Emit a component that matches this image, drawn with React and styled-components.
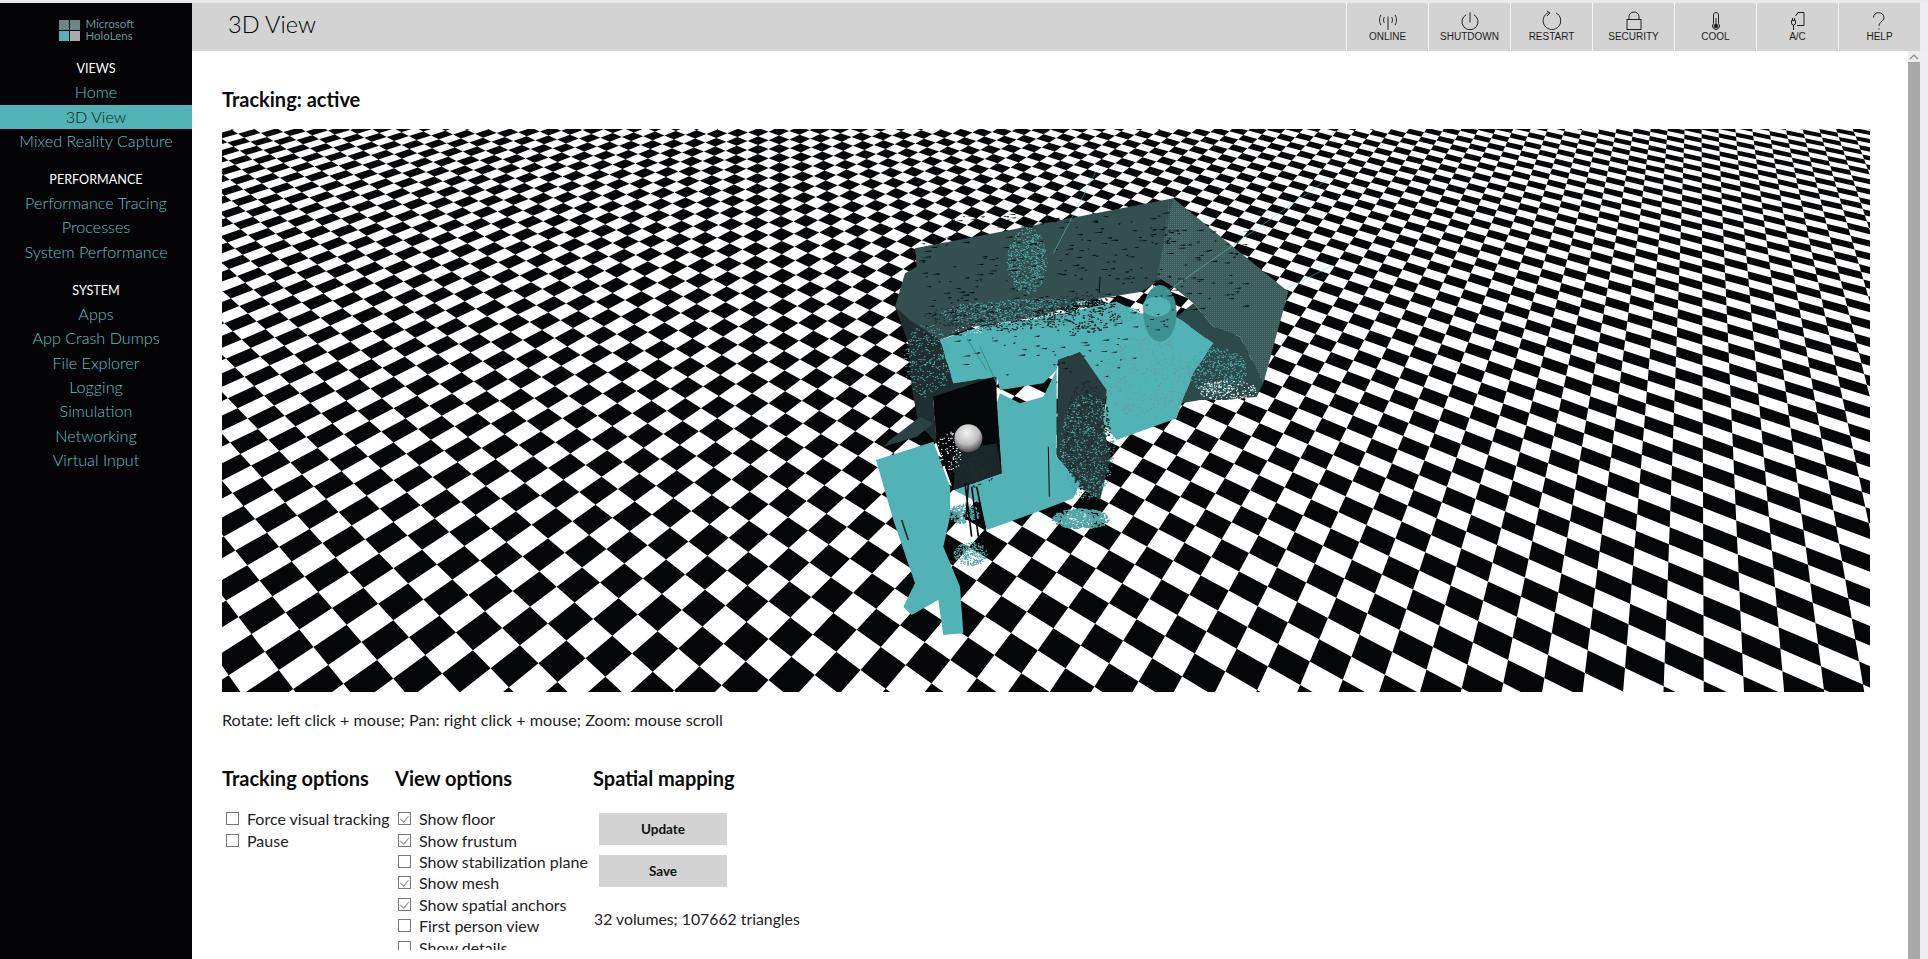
import React, { useMemo } from "react";
import styled, { createGlobalStyle } from "styled-components";

const UI = `"Lato", "Open Sans", sans-serif`;
const TEAL = "#52b3b6";

const Global = createGlobalStyle`
  html, body { margin: 0; padding: 0; height: 100%; overflow: hidden; background: #fff; }
  #root { height: 959px; }
  * { box-sizing: border-box; }
`;

const Page = styled.div`
  width: 1928px; height: 959px; overflow: hidden; background: #fff;
  display: flex; flex-direction: column; font-family: ${UI}; color: #111;
`;
const TopStrip = styled.div`height: 3px; flex: none; background: #e9e9eb;`;
const Body = styled.div`flex: 1; min-height: 0; display: flex;`;

const Sidebar = styled.nav`
  width: 192px; flex: none; background: #040407; display: flex; flex-direction: column;
`;
const LogoBlock = styled.div`
  height: 53px; flex: none; display: flex; align-items: center; justify-content: center;
  gap: 6px; padding: 1px 0 0 0;
`;
const LogoText = styled.div`
  font-size: 11.5px; line-height: 12px; color: #6f9293; width: 48px;
`;
const NavSection = styled.div`
  display: flex; flex-direction: column; margin-bottom: 13.4px;
`;
const NavHeading = styled.div`
  height: 24.35px; line-height: 26px; text-align: center; font-size: 12.6px; color: #fff;
`;
const NavItem = styled.a`
  height: 24.35px; line-height: 24px; text-align: center; font-size: 16.2px; font-weight: 300;
  background: ${(p) => (p.$active ? TEAL : "transparent")};
  color: ${(p) => (p.$active ? "#0b1a1b" : "#62c0c3")};
`;

const Right = styled.div`flex: 1; min-width: 0; display: flex; flex-direction: column;`;
const Header = styled.header`
  height: 48px; flex: none; display: flex; align-items: stretch;
  background: linear-gradient(to right, #d3d3d3 1728px, #ededef 1728px);
`;
const PageTitle = styled.h1`
  margin: 0; padding: 0 0 0 36px; flex: 1; font-weight: 300; font-size: 23.5px; line-height: 43px; color: #000;
`;
const ToolButton = styled.div`
  width: 82px; flex: none; display: flex; flex-direction: column; align-items: center;
  border-left: 1px solid #f4f4f4; background: #d3d3d3; padding-top: 8px;
`;
const ToolLabel = styled.span`
  font-family: "Liberation Sans", Arial, sans-serif; font-size: 10px; line-height: 12px; color: #1c1c1c;
`;
const EndCap = styled.div`width: 8px; flex: none; background: #ededef;`;

const Lower = styled.div`flex: 1; min-height: 0; display: flex;`;
const MainClip = styled.div`flex: 1; min-width: 0; height: 898.5px; overflow: hidden;`;
const Main = styled.main`padding: 36px 0 0 30px;`;
const Status = styled.h2`margin: 0 0 18px; font-size: 20px; line-height: 24px; font-weight: 700; color: #0a0a0a;`;
const Floor = styled.svg`display: block; width: 1648px; height: 563px;`;
const Hint = styled.p`margin: 18px 0 0; font-size: 16.2px; line-height: 20px; font-weight: 400; color: #222;`;
const Options = styled.div`display: flex; margin-top: 36px;`;
const Column = styled.section`width: ${(p) => p.$w}px; flex: none;`;
const OptionHeading = styled.h3`margin: 0; font-size: 20px; line-height: 24px; font-weight: 700; color: #0a0a0a;`;
const OptionList = styled.div`
  margin-top: 18px; padding-left: ${(p) => p.$inset}px; display: flex; flex-direction: column;
`;
const OptionRow = styled.label`
  height: 21.4px; display: flex; align-items: center; gap: 8px; font-size: 16px; color: #222; white-space: nowrap;
`;
const Check = styled.input.attrs({ type: "checkbox", readOnly: true })`
  appearance: none; margin: 0; width: 13px; height: 13px; flex: none; position: relative;
  border: 1px solid #777; background: #fff;
  &:checked::after {
    content: ""; position: absolute; left: 3px; top: 1px; width: 4px; height: 7px;
    border: solid #8a8a8a; border-width: 0 1px 1px 0; transform: rotate(40deg);
  }
`;
const ActionStack = styled.div`margin: 23px 0 0 6px; display: flex; flex-direction: column; gap: 10px;`;
const ActionButton = styled.button`
  width: 128px; height: 32px; border: 0; padding: 0; background: #d3d3d3; font-family: ${UI};
  font-size: 13.5px; font-weight: 700; color: #111;
`;
const Stats = styled.p`margin: 22px 0 0 1px; font-size: 15.8px; line-height: 20px; color: #222; white-space: nowrap;`;

const Scrollbar = styled.div`
  width: 20px; flex: none; display: flex; background: linear-gradient(to right, #fff 12px, #eeedf0 12px);
`;
const ScrollLane = styled.div`width: 12px; display: flex; flex-direction: column;`;
const ScrollArrow = styled.div`height: 11px; flex: none; background: #ecebee; display: flex; align-items: center; justify-content: center;`;
const ScrollThumb = styled.div`flex: 1; background: #a9a9a9;`;

const Ico = styled.svg`
  width: 26px; height: 19.5px; flex: none; overflow: visible; fill: none; stroke: #222; stroke-width: 1;
`;

const icons = {
  online: (
    <>
      <path d="M13 5.5V19" />
      <path d="M6 4C4 7 4 11 6 14" />
      <path d="M9.3 6C8.3 8 8.3 10 9.3 12" />
      <path d="M20 4C22 7 22 11 20 14" />
      <path d="M16.7 6C17.7 8 17.7 10 16.7 12" />
    </>
  ),
  power: (
    <>
      <path d="M13 1.5V11.5" />
      <path d="M9.2 3.7A8 8 0 1 0 16.8 3.7" />
    </>
  ),
  restart: (
    <>
      <path d="M17 1.9A8.8 8.8 0 1 1 9.5 1.6" />
      <path d="M8 0L11 2L8 5" />
    </>
  ),
  lock: (
    <>
      <rect x="6" y="8.5" width="14" height="10" />
      <path d="M8 8.5V5.5a5 4.5 0 0 1 10 0V8.5" />
    </>
  ),
  thermo: (
    <>
      <path d="M10.5 12.5V4a2.5 2.5 0 0 1 5 0V12.5a3.5 3.5 0 1 1-5 0z" />
      <path d="M13 7V14" />
      <circle cx="13" cy="15.1" r="1.9" fill="#222" />
    </>
  ),
  ac: (
    <>
      <path d="M10.5 5L13 1.5H19V14.5H12" />
      <path d="M6.5 9.5h4v2.5a2 2 0 0 1-4 0z" />
      <path d="M7.5 9.5V7M9.5 9.5V7M8.5 14v5" />
    </>
  ),
  help: (
    <>
      <path d="M6.5 6.5C6.5 3.5 9 1.7 11.7 1.7c3 0 5.3 2 5.3 4.6c0 2.5-1.7 3.5-3.2 5C12.5 12.5 12 13.5 12 15" />
      <path d="M12 17.3v1.2" />
    </>
  ),
};

const tools = [
  ["ONLINE", "online"], ["SHUTDOWN", "power"], ["RESTART", "restart"], ["SECURITY", "lock"],
  ["COOL", "thermo"], ["A/C", "ac"], ["HELP", "help"],
];

const navGroups = [
  ["VIEWS", ["Home", "3D View", "Mixed Reality Capture"]],
  ["PERFORMANCE", ["Performance Tracing", "Processes", "System Performance"]],
  ["SYSTEM", ["Apps", "App Crash Dumps", "File Explorer", "Logging", "Simulation", "Networking", "Virtual Input"]],
];

/* perspective floor: homography from two vanishing points */
function buildFloor() {
  const V1 = [1700, -280], V2 = [-480, -330], O = [1625, 668];
  const a = 0.0242, b = 0.01805;
  const P = (u, v) => {
    const w = a * u + b * v + 1;
    return [(a * u * V1[0] + b * v * V2[0] + O[0]) / w, (a * u * V1[1] + b * v * V2[1] + O[1]) / w, w];
  };
  let d = "";
  for (let u = -50; u < 260; u++) {
    for (let v = -30; v < 300; v++) {
      if (((u + v) & 1) === 0) continue;
      const q = [P(u, v), P(u + 1, v), P(u + 1, v + 1), P(u, v + 1)];
      if (q.some((p) => p[2] <= 0.02)) continue;
      const xs = q.map((p) => p[0]), ys = q.map((p) => p[1]);
      if (Math.max(...xs) < 222 || Math.min(...xs) > 1870 || Math.max(...ys) < 129 || Math.min(...ys) > 692) continue;
      d += `M${q.map((p) => p[0].toFixed(1) + " " + p[1].toFixed(1)).join("L")}Z`;
    }
  }
  return d;
}

function rng(seed) {
  let s = seed;
  return () => ((s = (s * 1664525 + 1013904223) >>> 0) / 4294967296);
}
function scatter(r, cx, cy, rx, ry, n, w = 4, h = 3) {
  let d = "";
  for (let i = 0; i < n; i++) {
    const t = r() * Math.PI * 2, k = Math.sqrt(r());
    const x = cx + Math.cos(t) * k * rx, y = cy + Math.sin(t) * k * ry;
    d += `M${x.toFixed(0)} ${y.toFixed(0)}h${w}v${h}h${-w}z`;
  }
  return d;
}
function dashes(r, box, n) {
  const [x0, y0, x1, y1] = box;
  let d = "";
  for (let i = 0; i < n; i++) {
    const x = x0 + r() * (x1 - x0), y = y0 + r() * (y1 - y0);
    const l = 6 + r() * 22;
    d += `M${x.toFixed(0)} ${y.toFixed(0)}l${l.toFixed(0)} ${(-l * 0.12).toFixed(1)}l-3 4z`;
  }
  return d;
}

const WALL_BACK = "M225 235L1000 85L990 310L905 365L720 395L600 440L400 470L300 510L210 450L165 410L195 310L230 290Z";
const WALL_RIGHT = "M1000 85L1345 365L1270 640L1200 500L1120 470L1060 400L1000 350L950 320Z";
const FLOOR_BACK = "M300 510L420 470L600 445L830 395L900 430L1010 440L1120 520L1060 610L1025 700L1010 745L830 810L790 760L800 680L720 545L655 570L650 600L610 640L480 660L470 620L340 640Z";
const CENTER = "M480 670L540 700L610 680L650 600L650 860L720 940L700 985L580 1030L440 1080L420 1000L340 960L485 910L470 700Z";
const LEG = "M108 870L280 815L330 950L330 1040L310 1130L360 1250L370 1390L310 1395L295 1290L215 1335L190 1310L225 1240L160 1050Z";
const PANEL = "M280 680L465 620L485 910L340 960L290 820Z";
const COLUMN = "M655 570L720 545L800 660L790 760L810 870L780 990L720 950L650 860Z";
const LEFT_FILL = "M165 410L300 510L340 640L470 620L470 680L280 690L290 820L235 760L215 650L205 520Z";
const RIGHT_FILL = "M1010 440L1060 400L1120 470L1200 500L1270 640L1250 680L1160 690L1080 690L1025 700L1060 610L1120 520Z";

function Mesh() {
  const s = useMemo(() => {
    const r = rng(7);
    return {
      backDash: dashes(r, [230, 130, 980, 480], 260),
      rightDash: dashes(r, [980, 180, 1230, 420], 60),
      floorDash: dashes(r, [320, 470, 880, 620], 50),
      tealBlob:
        scatter(r, 560, 270, 60, 100, 520) + scatter(r, 600, 430, 300, 45, 1200) + scatter(r, 260, 570, 70, 110, 300) +
        scatter(r, 740, 830, 80, 160, 800) + scatter(r, 720, 1045, 85, 30, 650, 6, 4) + scatter(r, 390, 1150, 50, 35, 320) +
        scatter(r, 1130, 600, 90, 70, 420) + scatter(r, 370, 1030, 45, 30, 220, 5, 4),
      darkBlob:
        scatter(r, 740, 800, 70, 170, 620, 5, 4) + scatter(r, 470, 440, 220, 40, 380, 5, 3) +
        scatter(r, 400, 880, 70, 70, 220, 4, 4) + scatter(r, 720, 430, 120, 60, 220, 5, 4),
      whiteBits: scatter(r, 1160, 660, 90, 30, 170, 4, 3) + scatter(r, 330, 840, 40, 60, 80, 4, 3) + scatter(r, 380, 480, 50, 15, 25, 4, 2),
      floorDots: scatter(r, 920, 620, 130, 130, 380, 3, 3),
    };
  }, []);
  return (
    <g transform="translate(840 170) scale(0.33333)">
      <defs>
        <pattern id="dither" width="6" height="6" patternUnits="userSpaceOnUse">
          <rect width="3" height="3" fill="#708c8b" />
        </pattern>
        <radialGradient id="ball" cx="0.45" cy="0.3" r="0.7">
          <stop offset="0" stopColor="#f4f4f4" />
          <stop offset="0.6" stopColor="#bdbdbd" />
          <stop offset="1" stopColor="#4a4a4a" />
        </radialGradient>
      </defs>
      <path d={FLOOR_BACK} fill={TEAL} />
      <path d={s.floorDots} fill="#7c8f90" />
      <path d={LEFT_FILL} fill="#1f2e2f" />
      <path d={RIGHT_FILL} fill="#2c4a4a" />
      <path d={WALL_BACK} fill="#334f4f" />
      <path d={WALL_RIGHT} fill="#3b5c5b" />
      <path d={WALL_RIGHT} fill="url(#dither)" opacity="0.35" />
      <path d="M985 90L1060 150L1030 340L960 320Z" fill="url(#dither)" opacity="0.4" />
      <ellipse cx="960" cy="430" rx="50" ry="85" fill="#3f9092" />
      <ellipse cx="950" cy="410" rx="42" ry="30" fill={TEAL} />
      <path d={COLUMN} fill="#2a3c3d" />
      <path d={PANEL} fill="#050708" />
      <path d={CENTER} fill={TEAL} />
      <path d={PANEL} fill="#050708" />
      <path d="M340 960L485 910L470 820L350 840Z" fill="#1a2627" />
      <path d="M150 810L240 740L280 760L230 800L130 830Z" fill="#2c4142" />
      <path d={LEG} fill={TEAL} />
      <path d={s.tealBlob} fill="#4fa5a8" />
      <path d={s.darkBlob} fill="#1d2c2d" />
      <path d={s.backDash + s.rightDash + s.floorDash} fill="#050708" />
      <path d={s.whiteBits} fill="#fff" />
      <path d="M375 940L395 1100M395 950L415 1100M410 950L440 1100M385 940L378 1050" stroke="#050708" strokeWidth="5" fill="none" />
      <path d="M185 1050L205 1110" stroke="#1d2c2d" strokeWidth="5" fill="none" />
      <path d="M625 830L628 980M780 320L778 370" stroke="#050708" strokeWidth="3" fill="none" />
      <path d="M420 530L470 640M380 505L440 600" stroke="#3f8a8c" strokeWidth="3" fill="none" />
      <circle cx="385" cy="805" r="42" fill="url(#ball)" />
      <path d="M770 0L640 250M1460 30L980 365M1480 285L1340 355" stroke="#6fc4c6" strokeWidth="2" fill="none" opacity="0.8" />
    </g>
  );
}

export default function App() {
  const floor = useMemo(buildFloor, []);
  return (
    <Page>
      <Global />
      <TopStrip />
      <Body>
        <Sidebar>
          <LogoBlock>
            <svg width="21" height="21" viewBox="0 0 21 21">
              <rect width="10" height="10" fill="#6f8583" />
              <rect x="11" width="10" height="10" fill="#6f8583" />
              <rect y="11" width="10" height="10" fill={TEAL} />
              <rect x="11" y="11" width="10" height="10" fill="#aaaaaa" />
            </svg>
            <LogoText>Microsoft<br />HoloLens</LogoText>
          </LogoBlock>
          {navGroups.map(([title, items]) => (
            <NavSection key={title}>
              <NavHeading>{title}</NavHeading>
              {items.map((it) => (
                <NavItem key={it} $active={it === "3D View"}>{it}</NavItem>
              ))}
            </NavSection>
          ))}
        </Sidebar>
        <Right>
          <Header>
            <PageTitle>3D View</PageTitle>
            {tools.map(([label, icon]) => (
              <ToolButton key={label}>
                <Ico viewBox="0 0 26 19.5">{icons[icon]}</Ico>
                <ToolLabel>{label}</ToolLabel>
              </ToolButton>
            ))}
            <EndCap />
          </Header>
          <Lower>
            <MainClip>
              <Main>
                <Status>Tracking: active</Status>
                <Floor viewBox="222 129 1648 563">
                  <rect x="222" y="129" width="1648" height="563" fill="#fff" />
                  <path d={floor} fill="#050608" />
                  <Mesh />
                </Floor>
                <Hint>Rotate: left click + mouse; Pan: right click + mouse; Zoom: mouse scroll</Hint>
                <Options>
                  <Column $w={173}>
                    <OptionHeading>Tracking options</OptionHeading>
                    <OptionList $inset={4}>
                      <OptionRow><Check />Force visual tracking</OptionRow>
                      <OptionRow><Check />Pause</OptionRow>
                    </OptionList>
                  </Column>
                  <Column $w={198}>
                    <OptionHeading>View options</OptionHeading>
                    <OptionList $inset={3}>
                      <OptionRow><Check defaultChecked />Show floor</OptionRow>
                      <OptionRow><Check defaultChecked />Show frustum</OptionRow>
                      <OptionRow><Check />Show stabilization plane</OptionRow>
                      <OptionRow><Check defaultChecked />Show mesh</OptionRow>
                      <OptionRow><Check defaultChecked />Show spatial anchors</OptionRow>
                      <OptionRow><Check />First person view</OptionRow>
                      <OptionRow><Check />Show details</OptionRow>
                    </OptionList>
                  </Column>
                  <Column $w={300}>
                    <OptionHeading>Spatial mapping</OptionHeading>
                    <ActionStack>
                      <ActionButton>Update</ActionButton>
                      <ActionButton>Save</ActionButton>
                    </ActionStack>
                    <Stats>32 volumes; 107662 triangles</Stats>
                  </Column>
                </Options>
              </Main>
            </MainClip>
            <Scrollbar>
              <ScrollLane>
                <ScrollArrow>
                  <svg width="10" height="6" viewBox="0 0 10 6"><path d="M1 5l4-4 4 4" fill="none" stroke="#8a8a8a" strokeWidth="1.2" /></svg>
                </ScrollArrow>
                <ScrollThumb />
              </ScrollLane>
            </Scrollbar>
          </Lower>
        </Right>
      </Body>
    </Page>
  );
}
